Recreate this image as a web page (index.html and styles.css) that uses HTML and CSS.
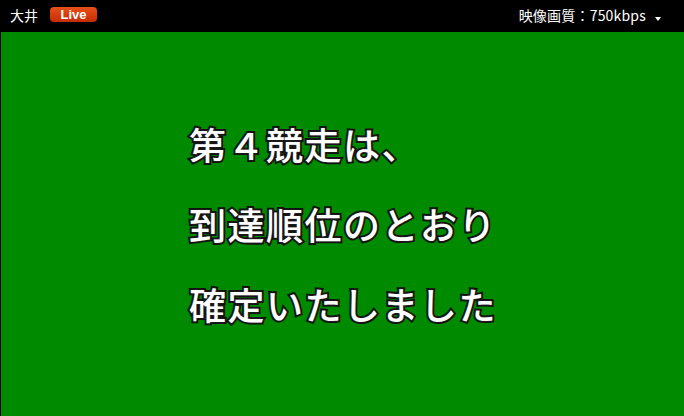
FILE: index.html
```html
<!DOCTYPE html>
<html lang="ja">
<head>
<meta charset="utf-8">
<link rel="stylesheet" href="styles.css">
</head>
<body>
<div class="player">
  <header class="bar">
    <div class="left">
      <span class="venue">大井</span>
      <span class="live">Live</span>
    </div>
    <div class="right">
      <span class="quality">映像画質：750kbps</span>
      <span class="caret"></span>
    </div>
  </header>
  <main class="screen">
    <div class="message">
      <p>第４競走は、</p>
      <p>到達順位のとおり</p>
      <p>確定いたしました</p>
    </div>
  </main>
</div>
</body>
</html>
```
FILE: styles.css
```css
html, body {
  margin: 0;
  padding: 0;
  background: #000;
}
body {
  width: 684px;
  height: 416px;
  overflow: hidden;
  font-family: "Noto Sans CJK JP", "Liberation Sans", sans-serif;
}
.player {
  display: flex;
  flex-direction: column;
  height: 416px;
}
.bar {
  height: 32px;
  background: #000;
  display: flex;
  align-items: center;
  justify-content: space-between;
  color: #fff;
  font-size: 14px;
}
.left {
  display: flex;
  align-items: center;
  padding-left: 10px;
  padding-bottom: 3px;
}
.venue {
  font-family: "Noto Sans CJK JP", sans-serif;
  font-size: 14px;
  line-height: 16px;
}
.live {
  margin-left: 12px;
  width: 47px;
  height: 15px;
  border-radius: 4px;
  background: linear-gradient(#e8501a, #c42c04);
  color: #fff;
  font-family: "Liberation Sans", sans-serif;
  font-weight: bold;
  font-size: 13px;
  line-height: 15px;
  text-align: center;
}
.right {
  display: flex;
  align-items: center;
  padding-right: 23px;
  padding-bottom: 2px;
}
.quality {
  font-family: "Noto Sans CJK JP", sans-serif;
  font-size: 14px;
  line-height: 16px;
  letter-spacing: 0.2px;
}
.caret {
  margin-left: 9px;
  margin-top: 7px;
  width: 0;
  height: 0;
  border-left: 3px solid transparent;
  border-right: 3px solid transparent;
  border-top: 4px solid #fff;
}
.screen {
  flex: 1;
  background: #008a00;
  border-left: 1px solid #000;
  display: flex;
  justify-content: flex-start;
}
.message {
  padding-left: 188px;
  padding-top: 72px;
}
.message p {
  margin: 0;
  height: 80px;
  line-height: 80px;
  font-size: 37px;
  letter-spacing: 1.5px;
  color: #fff;
  font-family: "Noto Sans CJK JP", sans-serif;
  font-weight: 500;
  -webkit-text-stroke: 4px #111;
  paint-order: stroke fill;
  text-shadow: 0 0 2px #333;
  white-space: nowrap;
}
```
